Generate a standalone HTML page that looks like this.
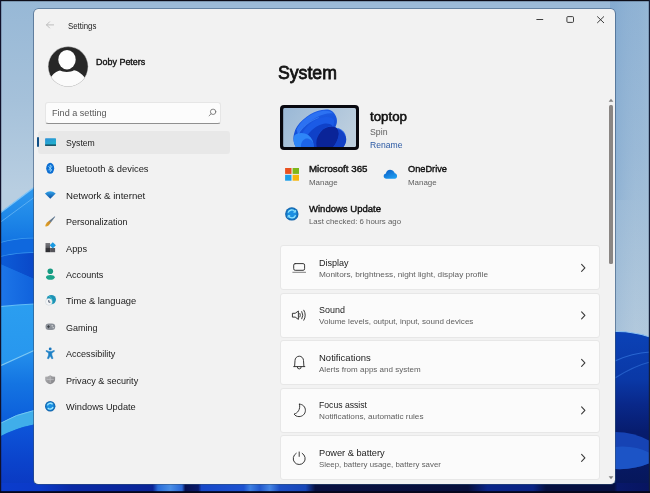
<!DOCTYPE html>
<html lang="en">
<head>
<meta charset="utf-8">
<title>Settings</title>
<style>
html,body{margin:0;padding:0;}
body{width:650px;height:493px;overflow:hidden;position:relative;background:#0a1a4a;font-family:"Liberation Sans",sans-serif;}
#wall{position:absolute;left:0;top:0;width:650px;height:493px;display:block;}
#win{position:absolute;left:34px;top:9px;width:581.2px;height:475px;background:#f2f2f2;border-radius:4.5px;box-shadow:0 0 0 0.8px rgba(50,80,115,.7);}
.t{position:absolute;white-space:nowrap;line-height:normal;transform-origin:0 50%;}
.abs{position:absolute;}
#sel{left:38px;top:130.5px;width:192px;height:23.4px;background:#e8e8e8;border-radius:3px;}
#ind{left:37.1px;top:137.2px;width:1.8px;height:9.7px;background:#0f4f86;border-radius:1px;}
#search{left:45.3px;top:102.3px;width:175.9px;height:21.5px;background:#fcfcfc;border-radius:3px;box-sizing:border-box;border:1px solid #e6e6e6;border-bottom:1px solid #909090;}
.card{position:absolute;left:280.2px;width:319.6px;height:45px;background:#fbfbfb;border:1px solid #e7e7e7;border-radius:3px;box-sizing:border-box;}
#thumb{left:279.6px;top:104.6px;width:79.6px;height:45.6px;background:#08080f;border-radius:4px;}
#thumb svg{position:absolute;left:3px;top:3px;width:73.6px;height:39.6px;border-radius:1.5px;}
#sbt{left:609.1px;top:105px;width:3.7px;height:158.5px;background:#8a8684;border-radius:1.5px;}
svg.ov{position:absolute;left:0;top:0;width:650px;height:493px;overflow:visible;}
</style>
</head>
<body>
<svg id="wall" viewBox="0 0 650 493">
<defs>
<linearGradient id="gsky" x1="0" y1="0" x2="1" y2="0"><stop offset="0" stop-color="#9cbad6"/><stop offset="0.5" stop-color="#9dbcd8"/><stop offset="1" stop-color="#98b8d6"/></linearGradient>
<linearGradient id="gskyv" x1="0" y1="0" x2="0" y2="1"><stop offset="0" stop-color="#9ab9d6" stop-opacity="0"/><stop offset="1" stop-color="#c0d0de" stop-opacity="0.75"/></linearGradient>
<linearGradient id="gskyL" x1="0" y1="0" x2="0" y2="200" gradientUnits="userSpaceOnUse"><stop offset="0" stop-color="#97b8d6"/><stop offset="0.5" stop-color="#a5c1da"/><stop offset="0.95" stop-color="#b8cee1"/><stop offset="1" stop-color="#b8cee1"/></linearGradient>
<linearGradient id="gskyR" x1="0" y1="0" x2="0" y2="335" gradientUnits="userSpaceOnUse"><stop offset="0" stop-color="#8fb2d4"/><stop offset="0.45" stop-color="#9bbad7"/><stop offset="0.75" stop-color="#a9c3da"/><stop offset="1" stop-color="#b4cadd"/></linearGradient>
<linearGradient id="gskyRh" x1="615" y1="0" x2="650" y2="0" gradientUnits="userSpaceOnUse"><stop offset="0" stop-color="#7ea6ce" stop-opacity=".55"/><stop offset="0.6" stop-color="#8fb2d4" stop-opacity=".1"/><stop offset="1" stop-color="#a8c4dc" stop-opacity=".35"/></linearGradient>
<linearGradient id="gL" x1="0" y1="0" x2="0" y2="1"><stop offset="0" stop-color="#2a93ea"/><stop offset="0.18" stop-color="#0f6ce0"/><stop offset="0.36" stop-color="#0b5fdc"/><stop offset="0.37" stop-color="#2d9af0"/><stop offset="0.6" stop-color="#1f8ae8"/><stop offset="0.72" stop-color="#0f66e0"/><stop offset="1" stop-color="#0a3ccc"/></linearGradient>
<linearGradient id="gLa" x1="0" y1="190" x2="0" y2="243" gradientUnits="userSpaceOnUse"><stop offset="0" stop-color="#2e98ee"/><stop offset="0.5" stop-color="#1f88e8"/><stop offset="1" stop-color="#1274e2"/></linearGradient>
<linearGradient id="gLb" x1="0" y1="0" x2="1" y2="0"><stop offset="0" stop-color="#0c5cd8"/><stop offset="1" stop-color="#0a48c8"/></linearGradient>
<linearGradient id="gLc" x1="0" y1="0" x2="1" y2="0"><stop offset="0" stop-color="#1d76e8"/><stop offset="1" stop-color="#1062dc"/></linearGradient>
<linearGradient id="gLd" x1="0" y1="304" x2="0" y2="366" gradientUnits="userSpaceOnUse"><stop offset="0" stop-color="#2b9ef0"/><stop offset="1" stop-color="#2796ee"/></linearGradient>
<linearGradient id="gLe" x1="0" y1="425" x2="0" y2="493" gradientUnits="userSpaceOnUse"><stop offset="0" stop-color="#0d55da"/><stop offset="0.5" stop-color="#0b44cc"/><stop offset="1" stop-color="#0a36c0"/></linearGradient>
<linearGradient id="gL2" x1="0" y1="351" x2="0" y2="424" gradientUnits="userSpaceOnUse"><stop offset="0" stop-color="#2490ec"/><stop offset="0.45" stop-color="#1474e2"/><stop offset="1" stop-color="#0b5cda"/></linearGradient>
<linearGradient id="gR" x1="0" y1="0" x2="0" y2="1"><stop offset="0" stop-color="#0b42b6"/><stop offset="0.3" stop-color="#0a38a6"/><stop offset="0.45" stop-color="#09288a"/><stop offset="0.62" stop-color="#071c6e"/><stop offset="1" stop-color="#061658"/></linearGradient>
</defs>
<rect width="650" height="493" fill="#9cbbd8"/>
<rect x="0" y="0" width="40" height="300" fill="url(#gskyL)"/>
<rect x="610" y="0" width="40" height="340" fill="url(#gskyR)"/>
<rect x="610" y="0" width="40" height="200" fill="url(#gskyRh)"/>
<rect x="610" y="200" width="40" height="135" fill="url(#gskyRh)" opacity=".5"/>
<!-- left petals -->
<path d="M0 213 L34 187.5 L34 493 L0 493Z" fill="#1272e2"/>
<path d="M0 213 L34 187.5 L34 239 L0 243Z" fill="url(#gLa)"/>
<path d="M0 213 L34 187.5" stroke="#7fc4f6" stroke-width="1.4" fill="none"/>
<path d="M0 222.5 L34 197.5" stroke="#6ab8f4" stroke-width="0.9" fill="none" opacity=".85"/>
<path d="M0 243 Q18 238 34 238.5" stroke="#4aa6f2" stroke-width="1.3" fill="none" opacity=".85"/>
<path d="M0 243 Q18 238 34 238.5 L34 253 Q18 252.5 0 257Z" fill="#0f68de"/>
<path d="M0 257 Q18 252.5 34 253" stroke="#3f9cf0" stroke-width="1.3" fill="none" opacity=".85"/>
<path d="M0 257 Q18 252.5 34 253 L34 279 L0 264Z" fill="url(#gLb)"/>
<path d="M0 264 L34 279 L34 304 Q18 304.6 0 306.6Z" fill="url(#gLc)"/>
<path d="M0 306.6 Q18 304.6 34 304 L34 351 L0 366Z" fill="url(#gLd)"/>
<path d="M0 306.6 Q18 304.6 34 304" stroke="#62bcf6" stroke-width="1.1" fill="none"/>
<path d="M0 366 L34 351 L34 411 L0 424Z" fill="url(#gL2)"/>
<path d="M0 366 L34 350.5" stroke="#7cc8f4" stroke-width="1.2" fill="none"/>
<path d="M0 423.5 Q16 414 34 410.5 L34 424.5 Q16 428 0 436.5Z" fill="#40aeea"/>
<path d="M0 423.5 Q16 414 34 410.5" stroke="#73c8f2" stroke-width="1" fill="none"/>
<path d="M0 436.5 Q16 428 34 424.5 L34 493 L0 493Z" fill="url(#gLe)"/>
<!-- right side -->
<path d="M615 331.5 Q632 331 650 337 L650 493 L615 493Z" fill="url(#gR)"/>
<path d="M615 331.5 Q632 331 650 337" stroke="#8cc2f2" stroke-width="1.1" fill="none"/>
<path d="M615 361 Q632 353 650 352" stroke="#2f6fd8" stroke-width="1.2" fill="none" opacity=".8"/>
<path d="M615 378 Q634 366 650 362" stroke="#2a66d0" stroke-width="1.2" fill="none" opacity=".8"/>
<path d="M615 432 Q634 432 650 441 L650 463 Q634 470 615 469Z" fill="#1848bc" opacity=".9"/>
<path d="M615 447 Q634 445 650 453 L650 463 Q634 470 615 469Z" fill="#2260d2" opacity=".6"/>
<!-- bottom strip -->
<linearGradient id="gbot" x1="0" y1="0" x2="650" y2="0" gradientUnits="userSpaceOnUse">
<stop offset="0" stop-color="#0b3ccc"/><stop offset="0.06" stop-color="#0b3ac8"/><stop offset="0.11" stop-color="#0a2aa6"/><stop offset="0.235" stop-color="#0a2496"/>
<stop offset="0.243" stop-color="#2a6cd8"/><stop offset="0.262" stop-color="#4a8ee6"/><stop offset="0.28" stop-color="#2a66d4"/><stop offset="0.285" stop-color="#081252"/><stop offset="0.305" stop-color="#0a1a6a"/>
<stop offset="0.31" stop-color="#1748c8"/><stop offset="0.375" stop-color="#1d52d0"/><stop offset="0.385" stop-color="#3d7fe2"/><stop offset="0.40" stop-color="#2258cc"/><stop offset="0.415" stop-color="#4585e4"/><stop offset="0.43" stop-color="#1d4fc4"/><stop offset="0.47" stop-color="#1746b8"/>
<stop offset="0.485" stop-color="#081040"/><stop offset="0.72" stop-color="#070f3c"/><stop offset="0.75" stop-color="#0a2588"/><stop offset="0.82" stop-color="#0a2384"/><stop offset="0.84" stop-color="#061040"/><stop offset="0.945" stop-color="#061042"/><stop offset="0.95" stop-color="#08186a"/><stop offset="1" stop-color="#071560"/>
</linearGradient>
<rect x="0" y="483" width="650" height="10" fill="url(#gbot)"/>
<!-- dark frame -->
<rect x="0" y="0" width="650" height="1.2" fill="#0d0d18"/>
<rect x="0" y="0" width="1.2" height="493" fill="#10102a"/>
<rect x="648.8" y="0" width="1.2" height="493" fill="#15203a"/>
<rect x="0" y="491.2" width="650" height="1.8" fill="#06061a"/>
</svg>

<div id="win"></div>
<div class="abs" id="sel"></div>
<div class="abs" id="ind"></div>
<div class="abs" id="search"></div>
<div class="card" style="top:245.3px"></div>
<div class="card" style="top:292.8px"></div>
<div class="card" style="top:340.3px"></div>
<div class="card" style="top:387.8px"></div>
<div class="card" style="top:435.3px"></div>
<div class="abs" id="thumb">
<svg viewBox="0 0 74 40">
<defs><linearGradient id="tbg" x1="0" y1="0" x2="1" y2="0.4"><stop offset="0" stop-color="#9ab8d6"/><stop offset="1" stop-color="#bccede"/></linearGradient>
<linearGradient id="tb1" x1="0" y1="0" x2="0.3" y2="1"><stop offset="0" stop-color="#1f62ea"/><stop offset="1" stop-color="#0f43cc"/></linearGradient></defs>
<rect width="74" height="40" fill="url(#tbg)"/>
<path d="M13.2 40 C10.5 36 9.6 31 11 26 C12 21 15 16 20 11.8 C25 7.5 30 4.6 34 3.4 C38 2 42 1.2 45 1.6 C49 2 52.5 5 54 10.4 C54.8 14 54 17 52.6 19.4 C54.5 20.4 57 21 59 22.2 C61.5 24 63.2 27 63.7 31 C64 34.5 62.6 38 60.2 40Z" fill="url(#tb1)"/>
<path d="M13.5 22 C17 14 26 7 34 4.4 C40 2.4 47 2 50.5 5.5 C46 4.6 39 6.4 33 9.8 C26 13.6 19 19 15 27Z" fill="#2f74f4" opacity=".9"/>
<path d="M18.5 27 C22 19 30 12.6 38 10 C43 8.6 48 8.8 51 11.4 C52 14 51.4 17 50 19 C44 18 38 21 34 26 C31 30 30 34 30.5 40 L20 40 C17 36 17 31 18.5 27Z" fill="#1b5be6"/>
<path d="M24 29 C27 22.6 34 17.6 41 16 C44.5 15.4 47.6 16 50 18 C44 18.6 39 21.6 36 26 C33.6 30 33 35 34 40 L25 40 C22.6 36.6 22.6 32.6 24 29Z" fill="#0f41c8"/>
<path d="M34 40 C32.6 34 34 28.6 38 24 C41.6 20 47 17.6 52.6 19.4 C55.6 20.6 57 24 56 28 C55 33 52.6 37 50 40Z" fill="#0a2498"/>
<path d="M50 40 C53 36.6 55.4 32 56 28 C56.5 25 55.6 22.4 54.4 20.6 C57.6 21 60.6 23 62.2 26.4 C64.2 31 63.4 36.6 60.2 40Z" fill="#1240c6"/>
<path d="M54.4 20.6 C58 21 61 23.4 62.6 27" stroke="#3a78ee" stroke-width="0.9" fill="none"/>
<path d="M13.2 40 C10.6 36.4 9.8 32 11.4 27.6 C15 24.6 21 24.4 25.6 27.6 C29.6 30.6 31 35 30.6 40Z" fill="#2e86f8"/>
<path d="M18 40 C17.4 36 19 32.6 22.4 31 C26 30 29.6 32.6 30.4 36 C30.7 37.6 30.7 39 30.6 40Z" fill="#1c64e8"/>
<path d="M15 27 C19 19 27 13 36 9.6" stroke="#4a90fa" stroke-width="0.7" fill="none" opacity=".8"/>
</svg>
</div>
<div class="abs" id="sbt"></div>

<svg class="ov" viewBox="0 0 650 493">
<defs>
<linearGradient id="gsys" x1="0" y1="0" x2="0.6" y2="1"><stop offset="0" stop-color="#2b8fd8"/><stop offset="1" stop-color="#22b4cc"/></linearGradient>
<linearGradient id="gnet" x1="0" y1="0" x2="0" y2="1"><stop offset="0" stop-color="#33a6ee"/><stop offset="1" stop-color="#0b4c9c"/></linearGradient>
<linearGradient id="gcloud" x1="0" y1="0" x2="0.7" y2="1"><stop offset="0" stop-color="#0a5cc4"/><stop offset="1" stop-color="#1e9cf0"/></linearGradient>
<radialGradient id="gwu" cx="0.5" cy="0.5" r="0.5"><stop offset="0.55" stop-color="#1b8fe2"/><stop offset="1" stop-color="#0f5fa6"/></radialGradient>
<linearGradient id="gapp" x1="0" y1="0" x2="0" y2="1"><stop offset="0" stop-color="#7b7b80"/><stop offset="0.5" stop-color="#5a5a5f"/><stop offset="0.55" stop-color="#37373b"/><stop offset="1" stop-color="#2c2c30"/></linearGradient>
<linearGradient id="gsh" x1="0" y1="0" x2="1" y2="1"><stop offset="0" stop-color="#b4b4b6"/><stop offset="1" stop-color="#7e7e82"/></linearGradient>
<linearGradient id="gbr" x1="1" y1="0" x2="0" y2="1"><stop offset="0" stop-color="#4d6c8c"/><stop offset="0.5" stop-color="#6f7f8c"/><stop offset="0.56" stop-color="#c98a2a"/><stop offset="1" stop-color="#e7a722"/></linearGradient>
</defs>
<!-- back arrow -->
<g stroke="#bababa" stroke-width="0.95" fill="none" stroke-linecap="round" stroke-linejoin="round"><path d="M46.5 24.9 H53.6 M49.6 21.8 L46.5 24.9 L49.6 28"/></g>
<!-- window controls -->
<g stroke="#2a2a2a" stroke-width="0.9" fill="none"><path d="M536.4 19.5 H543.2"/><rect x="566.9" y="16.6" width="6.6" height="5.8" rx="1"/><path d="M597.2 16.4 L604 23 M604 16.4 L597.2 23"/></g>
<!-- avatar -->
<g>
<clipPath id="avc"><circle cx="68.1" cy="66.6" r="20"/></clipPath>
<circle cx="68.1" cy="66.6" r="20" fill="#272727"/>
<g clip-path="url(#avc)">
<ellipse cx="67" cy="59.7" rx="8.7" ry="9.7" fill="#fdfdfd"/>
<path d="M46 88 L46 85 C49.5 78.5 54.5 71.2 60 70.6 C63 72.5 71 72.5 74 70.3 C80.5 71.2 86 78.5 90 85 L90 88Z" fill="#fbfbfb"/>
</g>
<circle cx="68.1" cy="66.6" r="20" fill="none" stroke="#e4e4e4" stroke-width="0.5"/>
</g>
<!-- search icon -->
<g stroke="#6a6a6a" stroke-width="0.8" fill="none" stroke-linecap="round"><circle cx="213.1" cy="111.8" r="2.7"/><path d="M211.1 113.8 L209.1 115.8"/></g>
<!-- nav icons -->
<g>
<rect x="45.1" y="138.3" width="10.9" height="7.4" rx="0.6" fill="url(#gsys)"/><rect x="45.1" y="144.6" width="10.9" height="1.1" fill="#0c2a3c"/>
<ellipse cx="50.2" cy="168.3" rx="4" ry="5.5" fill="#0c6ed2"/><path d="M48.4 166.3 L51.9 170 L50.2 171.6 V165 L51.9 166.6 L48.4 170.3" stroke="#9adcff" stroke-width="0.8" fill="none"/>
<path d="M44.9 193.6 Q50.3 189 55.7 193.6 L50.3 198.8Z" fill="url(#gnet)"/>
<path d="M54.9 216.2 L55.2 216.8 L48.6 225.6 Q46.5 226.8 45.2 226.3 Q45.5 224 47 222.6Z" fill="url(#gbr)"/>
<rect x="45.5" y="243" width="4.6" height="9.2" fill="url(#gapp)"/><rect x="50.1" y="248" width="5" height="4.2" fill="#55555b"/><path d="M52.8 242.2 L55.9 245.3 L52.8 248.4 L49.7 245.3Z" fill="#1b9ae2"/>
<circle cx="50.3" cy="271.3" r="2.8" fill="#179a82"/><path d="M46 277.2 C46 274.2 54.7 274.2 54.7 277.2 C54.7 280.6 46 280.6 46 277.2Z" fill="#1aa389"/>
<circle cx="51.3" cy="299.6" r="4.7" fill="#1f93b6"/><path d="M49 296 Q53 298 52 304" stroke="#3cc6cf" stroke-width="1" fill="none"/><circle cx="48.8" cy="301.9" r="3.3" fill="#f4f6f8" stroke="#b8c4cc" stroke-width="0.4"/><path d="M48.8 300 V302.2 H50.4" stroke="#23304a" stroke-width="0.8" fill="none"/>
<rect x="45.5" y="323.5" width="9.7" height="6.6" rx="3.3" fill="#8b9098"/><path d="M47 326.7 H50 M48.5 325.2 V328.2" stroke="#34383e" stroke-width="0.8"/><circle cx="52.2" cy="325.8" r="0.7" fill="#d8dadd"/><circle cx="53.2" cy="327.6" r="0.7" fill="#d8dadd"/>
<circle cx="50.2" cy="348.9" r="1.45" fill="#1c78be"/><path d="M46.2 350.4 L49 351.4 H51.4 L54.2 350.4 L54.4 351.3 L51.8 352.9 V355 L53 358.4 L51.8 358.8 L50.2 355.8 L48.6 358.8 L47.4 358.4 L48.6 355 V352.9 L46 351.3Z" fill="#1c80c6" stroke="#1c80c6" stroke-width="0.6" stroke-linejoin="round"/>
<path d="M50.2 375.2 Q52.6 376.8 55.1 376.8 V379.4 Q55.1 382.6 50.2 384.3 Q45.2 382.6 45.2 379.4 V376.8 Q47.8 376.8 50.2 375.2Z" fill="url(#gsh)"/><path d="M50.2 376.6 V383 M46.6 379.4 H53.8" stroke="#d0d0d2" stroke-width="0.7" opacity=".8"/>
<circle cx="50.2" cy="406.2" r="5.2" fill="url(#gwu)"/><path d="M47.4 405.4 A3 3 0 0 1 52.6 404.4 M53 407 A3 3 0 0 1 47.8 408" stroke="#9ae6ff" stroke-width="1.4" fill="none"/>
</g>
<!-- MS logo -->
<rect x="285.1" y="168" width="6.4" height="5.9" fill="#e9511f"/><rect x="292.6" y="168" width="6.4" height="5.9" fill="#7db71a"/><rect x="285.1" y="174.8" width="6.4" height="5.9" fill="#1c9fe9"/><rect x="292.6" y="174.8" width="6.4" height="5.9" fill="#f6b60c"/>
<!-- OneDrive -->
<path d="M386.5 178.7 C383 178.7 382.7 174.2 385.9 173.6 C386.2 170.4 389.6 168.8 392.2 170.3 C393.8 171.1 394.5 172.3 394.7 173.2 C397.8 173.4 398 178.7 394.7 178.7Z" fill="url(#gcloud)"/>
<!-- WU big -->
<circle cx="291.8" cy="213.9" r="6.7" fill="url(#gwu)"/><path d="M288 212.6 A4 4 0 0 1 295 211.6 M295.6 215.2 A4 4 0 0 1 288.6 216.2" stroke="#8ee4ff" stroke-width="1.3" fill="none"/><path d="M295.6 210 V212.2 H293.4 M288 217.8 V215.6 H290.2" stroke="#8ee4ff" stroke-width="0.9" fill="none"/>
<!-- card icons -->
<g stroke="#2e2e2e" stroke-width="0.95" fill="none" stroke-linecap="round" stroke-linejoin="round">
<rect x="293.7" y="263.6" width="10.9" height="6.7" rx="1.5"/><path d="M292.8 272.3 H305.6" stroke="#7a7a7a"/>
<path d="M292.8 313.3 H295.2 L298.4 311 V319.4 L295.2 317.1 H292.8Z"/><path d="M299.9 313.4 Q300.9 315.2 299.9 317"/><path d="M301.8 311.6 Q304 315.2 301.8 318.8"/><path d="M303.8 310.2 Q306.8 315.2 303.8 320.2"/>
<path d="M293.7 366.6 H304.8 M294.6 366.4 L295 360.6 A4.25 4.4 0 0 1 303.5 360.6 L303.9 366.4"/><path d="M297.3 367 A1.95 1.95 0 0 0 301.2 367"/>
<path d="M299.5 404.2 C303 404.2 305.4 407 305.4 410.4 C305.4 414 302.4 416.6 299 416.6 C296.8 416.6 295 415.6 294.1 414 C297.6 413.2 300.6 409.6 299.5 404.2Z"/>
<path d="M296.2 453.3 A6 6 0 1 0 302.2 453.3"/><path d="M299.2 452 V456.4"/>
</g>
<!-- chevrons -->
<g stroke="#3a3a3a" stroke-width="1.1" fill="none" stroke-linecap="round" stroke-linejoin="round">
<path d="M581.6 264.3 L584.9 267.8 L581.6 271.3"/>
<path d="M581.6 311.8 L584.9 315.3 L581.6 318.8"/>
<path d="M581.6 359.3 L584.9 362.8 L581.6 366.3"/>
<path d="M581.6 406.8 L584.9 410.3 L581.6 413.8"/>
<path d="M581.6 454.3 L584.9 457.8 L581.6 461.3"/>
</g>
<!-- scrollbar arrows -->
<path d="M608.6 101.8 L611 98.8 L613.4 101.8Z" fill="#858585"/>
<path d="M608.6 476.2 L611 479.2 L613.4 476.2Z" fill="#858585"/>
</svg>
<div id="txt" style="position:absolute;left:0;top:0;width:650px;height:493px;will-change:transform;">
<span class="t" id="t0" style="left:67.7px;top:21.00px;font-size:8.7px;font-weight:400;color:#222;transform:scaleX(0.9015);">Settings</span>
<span class="t" id="t1" style="left:95.5px;top:57.00px;font-size:8.8px;font-weight:400;color:#111;-webkit-text-stroke:0.37px #111;transform:scaleX(1.0185);">Doby Peters</span>
<span class="t" id="t2" style="left:52.2px;top:107.00px;font-size:9.4px;font-weight:400;color:#585858;transform:scaleX(0.9699);">Find a setting</span>
<span class="t" id="t3" style="left:66px;top:137.00px;font-size:9.8px;font-weight:400;color:#1b1b1b;transform:scaleX(0.8815);">System</span>
<span class="t" id="t4" style="left:66px;top:163.00px;font-size:9.8px;font-weight:400;color:#1b1b1b;transform:scaleX(0.9527);">Bluetooth &amp; devices</span>
<span class="t" id="t5" style="left:66px;top:190.00px;font-size:9.8px;font-weight:400;color:#1b1b1b;transform:scaleX(0.9839);">Network &amp; internet</span>
<span class="t" id="t6" style="left:66px;top:216.00px;font-size:9.8px;font-weight:400;color:#1b1b1b;transform:scaleX(0.9194);">Personalization</span>
<span class="t" id="t7" style="left:66px;top:243.00px;font-size:9.8px;font-weight:400;color:#1b1b1b;transform:scaleX(0.9399);">Apps</span>
<span class="t" id="t8" style="left:66px;top:269.00px;font-size:9.8px;font-weight:400;color:#1b1b1b;transform:scaleX(0.9278);">Accounts</span>
<span class="t" id="t9" style="left:66px;top:295.00px;font-size:9.8px;font-weight:400;color:#1b1b1b;transform:scaleX(0.9525);">Time &amp; language</span>
<span class="t" id="t10" style="left:66px;top:322.00px;font-size:9.8px;font-weight:400;color:#1b1b1b;transform:scaleX(0.9180);">Gaming</span>
<span class="t" id="t11" style="left:66px;top:348.00px;font-size:9.8px;font-weight:400;color:#1b1b1b;transform:scaleX(0.9239);">Accessibility</span>
<span class="t" id="t12" style="left:66px;top:375.00px;font-size:9.8px;font-weight:400;color:#1b1b1b;transform:scaleX(0.9273);">Privacy &amp; security</span>
<span class="t" id="t13" style="left:66px;top:401.00px;font-size:9.8px;font-weight:400;color:#1b1b1b;transform:scaleX(0.9411);">Windows Update</span>
<span class="t" id="t14" style="left:277.6px;top:63.00px;font-size:18.0px;font-weight:400;color:#111;-webkit-text-stroke:0.76px #111;transform:scaleX(0.9814);">System</span>
<span class="t" id="t15" style="left:370px;top:110.00px;font-size:12.4px;font-weight:400;color:#111;-webkit-text-stroke:0.52px #111;transform:scaleX(1.0739);">toptop</span>
<span class="t" id="t16" style="left:370px;top:127.00px;font-size:9.0px;font-weight:400;color:#606060;transform:scaleX(0.9714);">Spin</span>
<span class="t" id="t17" style="left:370px;top:140.00px;font-size:9.0px;font-weight:400;color:#2c5aa4;transform:scaleX(0.9550);">Rename</span>
<span class="t" id="t18" style="left:309px;top:163.00px;font-size:9.6px;font-weight:400;color:#111;-webkit-text-stroke:0.40px #111;transform:scaleX(1.0157);">Microsoft 365</span>
<span class="t" id="t19" style="left:309px;top:178.00px;font-size:8.0px;font-weight:400;color:#606060;transform:scaleX(0.9923);">Manage</span>
<span class="t" id="t20" style="left:407.5px;top:163.00px;font-size:9.6px;font-weight:400;color:#111;-webkit-text-stroke:0.40px #111;transform:scaleX(0.9622);">OneDrive</span>
<span class="t" id="t21" style="left:407.5px;top:178.00px;font-size:8.0px;font-weight:400;color:#606060;transform:scaleX(0.9923);">Manage</span>
<span class="t" id="t22" style="left:309px;top:203.00px;font-size:9.6px;font-weight:400;color:#111;-webkit-text-stroke:0.40px #111;transform:scaleX(0.9927);">Windows Update</span>
<span class="t" id="t23" style="left:309px;top:217.00px;font-size:8.0px;font-weight:400;color:#606060;transform:scaleX(0.9804);">Last checked: 6 hours ago</span>
<span class="t" id="t24" style="left:319.3px;top:257.00px;font-size:9.8px;font-weight:400;color:#1b1b1b;transform:scaleX(0.9214);">Display</span>
<span class="t" id="t25" style="left:319.3px;top:270.00px;font-size:8.0px;font-weight:400;color:#606060;transform:scaleX(1.0299);">Monitors, brightness, night light, display profile</span>
<span class="t" id="t26" style="left:319.3px;top:304.00px;font-size:9.8px;font-weight:400;color:#1b1b1b;transform:scaleX(0.9138);">Sound</span>
<span class="t" id="t27" style="left:319.3px;top:317.00px;font-size:8.0px;font-weight:400;color:#606060;transform:scaleX(1.0063);">Volume levels, output, input, sound devices</span>
<span class="t" id="t28" style="left:319.3px;top:352.00px;font-size:9.8px;font-weight:400;color:#1b1b1b;transform:scaleX(0.9686);">Notifications</span>
<span class="t" id="t29" style="left:319.3px;top:365.00px;font-size:8.0px;font-weight:400;color:#606060;transform:scaleX(1.0022);">Alerts from apps and system</span>
<span class="t" id="t30" style="left:319.3px;top:399.00px;font-size:9.8px;font-weight:400;color:#1b1b1b;transform:scaleX(0.8815);">Focus assist</span>
<span class="t" id="t31" style="left:319.3px;top:412.00px;font-size:8.0px;font-weight:400;color:#606060;transform:scaleX(1.0218);">Notifications, automatic rules</span>
<span class="t" id="t32" style="left:319.3px;top:447.00px;font-size:9.8px;font-weight:400;color:#1b1b1b;transform:scaleX(0.9426);">Power &amp; battery</span>
<span class="t" id="t33" style="left:319.3px;top:460.00px;font-size:8.0px;font-weight:400;color:#606060;transform:scaleX(0.9824);">Sleep, battery usage, battery saver</span>
</div>
</body>
</html>
